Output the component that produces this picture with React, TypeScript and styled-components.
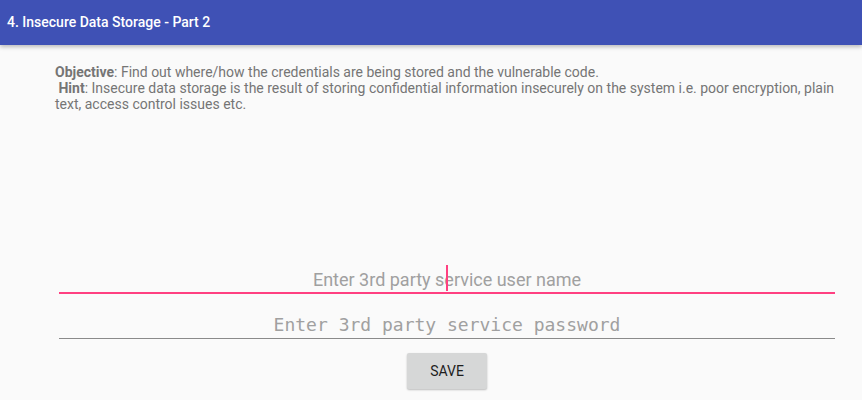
import styled, {createGlobalStyle} from "styled-components";

const GlobalStyle = createGlobalStyle`
    html, body {
        margin: 0;
        padding: 0;
        background: #fafafa;
        font-family: Roboto, "Noto Sans", sans-serif;
    }
`;

const Screen = styled.div`
    width: 862px;
    height: 400px;
    overflow: hidden;
    background: #fafafa;
`;

const Toolbar = styled.header`
    height: 45px;
    background: #3f51b5;
    display: flex;
    align-items: center;
    padding-left: 7px;
    box-shadow: 0 2px 4px rgba(0, 0, 0, 0.25);
    position: relative;
`;

const Title = styled.h1`
    margin: 0;
    color: #ffffff;
    font-size: 14px;
    font-weight: 500;
    padding-bottom: 2px;
`;

const Description = styled.p`
    margin: 19px 14px 0 55px;
    color: #757575;
    font-size: 14px;
    line-height: 16px;

    b {
        font-weight: 700;
    }
`;

const Form = styled.form`
    margin: 150px 27px 0 59px;
    display: flex;
    flex-direction: column;
    align-items: center;
`;

const Field = styled.div`
    position: relative;
    width: 100%;
`;

const Input = styled.input<{ $focused?: boolean; $mono?: boolean }>`
    box-sizing: border-box;
    width: 100%;
    height: ${(p) => (p.$focused ? "32px" : "33px")};
    border: none;
    border-bottom: ${(p) => (p.$focused ? "2px solid #ff4081" : "1px solid #8a8a8a")};
    background: transparent;
    outline: none;
    text-align: center;
    font-family: ${(p) => (p.$mono ? '"DejaVu Sans Mono", "Liberation Mono", monospace' : 'Roboto, "Noto Sans", sans-serif')};
    font-size: 18px;
    padding: 4px 0 0;
    color: #333;

    &::placeholder {
        color: #a0a0a0;
    }
`;

const Caret = styled.span`
    position: absolute;
    left: 387px;
    top: 3px;
    width: 2px;
    height: 26px;
    background: #ff4081;
`;

const Spacer = styled.div`
    height: 12px;
`;

const SaveButton = styled.button`
    margin-top: 14px;
    width: 80px;
    height: 36px;
    border: none;
    border-radius: 2px;
    background: #d6d7d7;
    color: #1e1e1e;
    font-family: Roboto, "Noto Sans", sans-serif;
    font-size: 14px;
    font-weight: 400;
    box-shadow: 0 1px 2px rgba(0, 0, 0, 0.25);
`;

export default function App() {
    return (
        <Screen>
            <GlobalStyle/>
            <Toolbar>
                <Title>4. Insecure Data Storage - Part 2</Title>
            </Toolbar>
            <Description>
                <b>Objective</b>: Find out where/how the credentials are being stored and the vulnerable code.
                <br/>
                &nbsp;<b>Hint</b>: Insecure data storage is the result of storing confidential information insecurely on the system i.e. poor encryption, plain text, access control issues etc.
            </Description>
            <Form onSubmit={(e) => e.preventDefault()}>
                <Field>
                    <Input $focused placeholder="Enter 3rd party service user name"/>
                    <Caret/>
                </Field>
                <Spacer/>
                <Field>
                    <Input $mono type="password" placeholder="Enter 3rd party service password"/>
                </Field>
                <SaveButton type="button">SAVE</SaveButton>
            </Form>
        </Screen>
    );
}
